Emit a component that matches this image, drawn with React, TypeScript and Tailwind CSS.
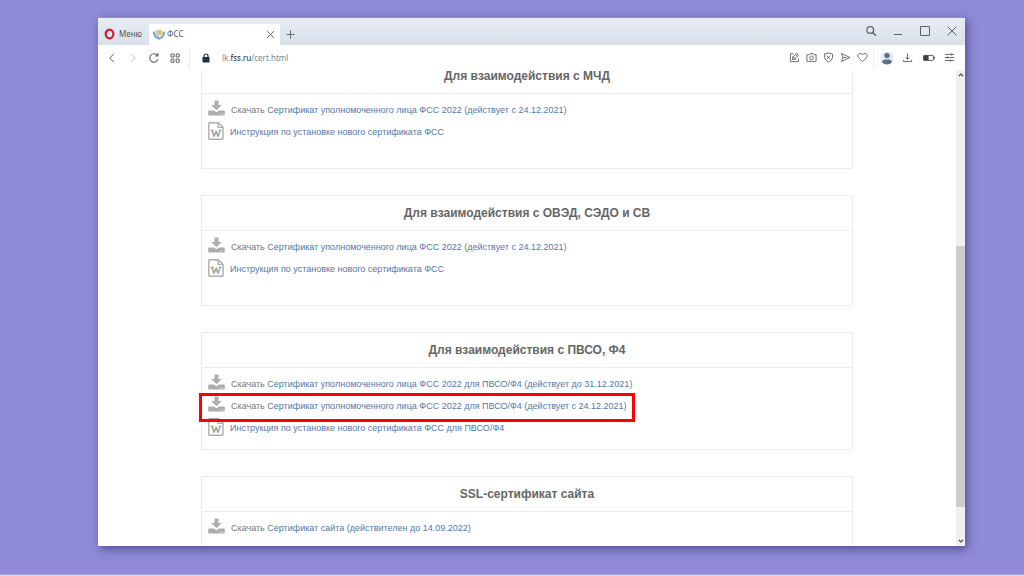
import { useState, type ReactNode } from 'react';
import clsx from 'clsx';

type Item = {
  kind: 'cert' | 'doc';
  text: string;
  marked?: boolean;
};

type Section = {
  title: string;
  items: Item[];
  tall?: boolean;
};

const sections: Section[] = [
  {
    title: 'Для взаимодействия с МЧД',
    tall: true,
    items: [
      { kind: 'cert', text: 'Сертификат уполномоченного лица ФСС 2022 (действует с 24.12.2021)' },
      { kind: 'doc', text: 'Инструкция по установке нового сертификата ФСС' },
    ],
  },
  {
    title: 'Для взаимодействия с ОВЭД, СЭДО и СВ',
    tall: true,
    items: [
      { kind: 'cert', text: 'Сертификат уполномоченного лица ФСС 2022 (действует с 24.12.2021)' },
      { kind: 'doc', text: 'Инструкция по установке нового сертификата ФСС' },
    ],
  },
  {
    title: 'Для взаимодействия с ПВСО, Ф4',
    items: [
      { kind: 'cert', text: 'Сертификат уполномоченного лица ФСС 2022 для ПВСО/Ф4 (действует до 31.12.2021)' },
      { kind: 'cert', text: 'Сертификат уполномоченного лица ФСС 2022 для ПВСО/Ф4 (действует с 24.12.2021)', marked: true },
      { kind: 'doc', text: 'Инструкция по установке нового сертификата ФСС для ПВСО/Ф4' },
    ],
  },
  {
    title: 'SSL-сертификат сайта',
    items: [{ kind: 'cert', text: 'Сертификат сайта (действителен до 14.09.2022)' }],
  },
];

function DownloadIcon() {
  return (
    <svg viewBox="0 0 17 16" className="w-[17px] h-4 shrink-0" fill="#adadad" aria-hidden="true">
      <path d="M6.5 0.5h4v4.5h3.3L8.5 10.3 3.2 5h3.3z" />
      <path d="M1 10.5h5.2l1.4 1.3q0.9 0.7 1.8 0l1.4-1.3H16q0.8 0 0.8 0.8v3.4q0 0.8-0.8 0.8H1q-0.8 0-0.8-0.8v-3.4q0-0.8 0.8-0.8z" />
      <path d="M12 13.5h1v1h-1zM14.2 13.5h1v1h-1z" fill="#e6e6e6" />
    </svg>
  );
}

function WordIcon() {
  return (
    <svg viewBox="0 0 16 18" className="w-4 h-[18px] shrink-0" aria-hidden="true">
      <path d="M1.5 0.8h8.8l4.7 4.4v11.3q0 0.7-0.7 0.7H1.5q-0.7 0-0.7-0.7V1.5q0-0.7 0.7-0.7z" fill="#fff" stroke="#adadad" strokeWidth="1.4" />
      <path d="M10 0.8v4.6h5" fill="none" stroke="#adadad" strokeWidth="1.3" />
      <text
        x="8"
        y="14.8"
        textAnchor="middle"
        fontSize="11"
        fontFamily="Liberation Serif, serif"
        fill="#9e9e9e"
        stroke="#9e9e9e"
        strokeWidth="0.5"
      >
        W
      </text>
    </svg>
  );
}

function Line({ children, size = 12, className }: { children: ReactNode; size?: number; className?: string }) {
  return (
    <svg
      viewBox="0 0 12 12"
      width={size}
      height={size}
      fill="none"
      stroke="#5c6268"
      strokeWidth="1"
      className={className}
      aria-hidden="true"
    >
      {children}
    </svg>
  );
}

function Tool({ label, wide, children }: { label: string; wide?: boolean; children: ReactNode }) {
  return (
    <button aria-label={label} className={clsx('h-full shrink-0 flex items-center justify-center', wide ? 'w-[21px]' : 'w-[17px]')}>
      {children}
    </button>
  );
}

function WindowButton({ label, children }: { label: string; children: ReactNode }) {
  return (
    <button aria-label={label} className="w-[27px] h-full flex items-center justify-center">
      {children}
    </button>
  );
}

function TitleBar({ onClose }: { onClose: () => void }) {
  return (
    <div className="h-7 flex items-end border-t border-[#6d9fe0] bg-linear-to-b from-[#e5edf5] to-[#d9e0e9] font-['Noto_Sans'] text-[8px] text-[#555]">
      <button className="w-[51px] h-[21px] pl-1.5 flex items-center gap-1">
        <svg viewBox="0 0 12 12" width="11" height="12" aria-hidden="true">
          <ellipse cx="6" cy="6" rx="4.2" ry="4.7" fill="none" stroke="#e3142b" strokeWidth="2.4" />
        </svg>
        Меню
      </button>
      <div className="w-[131px] h-[21px] px-1 flex items-center gap-0.5 bg-white">
        <svg viewBox="0 0 12 12" width="12" height="12" aria-hidden="true">
          <path d="M1 3.5Q0.5 9 6 10.8 11.5 9 11 3.5" fill="none" stroke="#7ba3d0" strokeWidth="2" />
          <path d="M3 2.5Q2.5 7 6 9" fill="none" stroke="#a9c4e2" strokeWidth="1.5" />
          <circle cx="6.6" cy="4.4" r="3" fill="#e4c877" />
          <path d="M5.5 3.5l2 2" stroke="#8b9fb0" strokeWidth="0.7" />
        </svg>
        <span className="grow">ФСС</span>
        <button aria-label="Закрыть вкладку" onClick={onClose}>
          <Line size={11}>
            <path d="M2.3 2.3l7.4 7.4M9.7 2.3L2.3 9.7" />
          </Line>
        </button>
      </div>
      <button aria-label="Новая вкладка" className="w-[21px] h-[21px] flex items-center justify-center">
        <Line size={11}>
          <path d="M6 1.5v9M1.5 6h9" />
        </Line>
      </button>
      <div className="grow" />
      <div className="h-full flex">
        <WindowButton label="Поиск">
          <Line>
            <circle cx="5.2" cy="5" r="3.4" strokeWidth="1.2" />
            <path d="M7.7 7.5l3.3 3.3" strokeWidth="1.4" />
          </Line>
        </WindowButton>
        <WindowButton label="Свернуть">
          <Line>
            <path d="M2 9.5h8" />
          </Line>
        </WindowButton>
        <WindowButton label="Развернуть">
          <Line>
            <path d="M1.5 1.5h9v9h-9z" />
          </Line>
        </WindowButton>
        <WindowButton label="Закрыть">
          <Line>
            <path d="M1.7 1.7l8.6 8.6M10.3 1.7l-8.6 8.6" />
          </Line>
        </WindowButton>
      </div>
    </div>
  );
}

function AddressBar() {
  return (
    <div className="h-[25px] pt-px pl-[3px] pr-[5px] flex items-center bg-white">
      <Tool wide label="Назад">
        <Line>
          <path d="M7.8 1.8L3.8 6l4 4.2" />
        </Line>
      </Tool>
      <Tool wide label="Вперёд">
        <Line className="opacity-40">
          <path d="M4.2 1.8l4 4.2-4 4.2" />
        </Line>
      </Tool>
      <Tool wide label="Обновить">
        <Line>
          <path d="M10 7.2A4.2 4.2 0 1 1 9.3 3.4M9.9 1v3H7" strokeWidth="1.1" />
        </Line>
      </Tool>
      <Tool wide label="Экспресс-панель">
        <Line>
          <path d="M2 2h3v3H2zM7.2 2h3v3h-3zM2 7.2h3v3H2zM7.2 7.2h3v3h-3z" />
        </Line>
      </Tool>
      <div className="w-px h-5 ml-1 mr-3 bg-[#eeeff1]" />
      <svg viewBox="0 0 8 10" width="8" height="10" aria-hidden="true">
        <path d="M2 5V3a2 2 0 0 1 4 0v2" fill="none" stroke="#26303a" strokeWidth="1.2" />
        <rect x="0.5" y="4" width="7" height="5.4" rx="0.6" fill="#26303a" />
      </svg>
      <button aria-label="Адрес страницы" className="ml-3 grow text-left font-['Noto_Sans'] text-[8px] text-[#7d8792]">
        lk.<span className="text-[#20262c]">fss.ru</span>/cert.html
      </button>
      <Tool label="Поделиться">
        <Line size={11}>
          <path d="M5 2H1.5v8.5h8.8V7" />
          <path d="M3.6 8.3l0.5-2.4L8.5 1.4l2 2L6 7.8zM7.2 2.7l2 2M3.8 5l4 3.6" />
        </Line>
      </Tool>
      <Tool label="Снимок экрана">
        <Line size={11}>
          <path d="M1 3h2.4l1-1.3h3.2l1 1.3H11v7.2H1z" />
          <circle cx="6" cy="6.4" r="2" />
        </Line>
      </Tool>
      <Tool label="Блокировка рекламы">
        <Line size={11}>
          <path d="M6 1l4.4 1.2v3.6Q10.2 9 6 11 1.8 9 1.6 5.8V2.2z" />
          <path d="M4.3 4l3.4 3.6M7.7 4L4.3 7.6" />
        </Line>
      </Tool>
      <Tool label="Отправить">
        <Line size={11}>
          <path d="M1.5 1.7L11 6l-9.5 4.3L3.2 6zM3.2 6h4" />
        </Line>
      </Tool>
      <Tool label="В закладки">
        <Line size={11}>
          <path d="M6 10.6L2 6.6C-0.2 4 1.2 1.5 3.3 1.5 4.8 1.5 5.6 2.4 6 3.2 6.4 2.4 7.2 1.5 8.7 1.5c2.1 0 3.5 2.5 1.3 5.1z" />
        </Line>
      </Tool>
      <div className="w-px h-5 mx-0.5 bg-[#eeeff1]" />
      <Tool wide label="Профиль">
        <svg viewBox="0 0 14 14" width="14" height="14" aria-hidden="true">
          <circle cx="7" cy="7" r="6.6" fill="#e4ebf3" />
          <circle cx="7" cy="4.6" r="2.7" fill="#5f6f86" />
          <path d="M2 11.3q0.5-2.8 3.5-2.8h3q3 0 3.5 2.8Q9.8 13.5 7 13.5t-5-2.2z" fill="#5f6f86" />
        </svg>
      </Tool>
      <Tool wide label="Загрузки">
        <Line size={11}>
          <path d="M6 1.5v6.3M3.8 5.8L6 8l2.2-2.2M1.5 8.5v1.8h9V8.5" />
        </Line>
      </Tool>
      <Tool wide label="Экономия заряда">
        <Line size={12}>
          <rect x="0.6" y="3.4" width="9.8" height="5" rx="0.6" />
          <rect x="0.6" y="3.4" width="5" height="5" fill="#3b4148" stroke="none" />
          <path d="M11.5 4.8v2.4" />
        </Line>
      </Tool>
      <Tool wide label="Простая настройка">
        <Line size={11}>
          <path d="M1 2.7h10M1 6h10M1 9.3h10M8 1.5v2.4M4 4.8v2.4M7 8.1v2.4" />
        </Line>
      </Tool>
    </div>
  );
}

function Row({ item }: { item: Item }) {
  return (
    <li className="relative w-fit h-[22px] flex items-start whitespace-nowrap">
      {item.kind === 'cert' ? <DownloadIcon /> : <WordIcon />}
      <p className="ml-1.5 self-center">
        {item.kind === 'cert' && 'Скачать '}
        <a href="#cert" className="text-[#5578a8]">
          {item.text}
        </a>
      </p>
      {item.marked && (
        <span className="absolute -top-[3px] -bottom-1 -left-[9px] -right-2 z-10 border-3 border-[#fe0000] pointer-events-none" />
      )}
    </li>
  );
}

function Card({ section }: { section: Section }) {
  return (
    <section className="border border-[#ececec]">
      <h2 className="h-[35px] flex items-center justify-center border-b border-[#ececec] text-[12px] font-bold text-[#666]">
        {section.title}
      </h2>
      <ul className={clsx('pt-1.5 pl-1.5 text-[9px] text-[#777]', section.tall ? 'pb-6' : 'pb-[9px]')}>
        {section.items.map((item) => (
          <Row key={item.text} item={item} />
        ))}
      </ul>
    </section>
  );
}

function ScrollBar() {
  return (
    <div className="w-[9px] shrink-0 flex flex-col bg-[#f0f0f0]">
      <button aria-label="Вверх" className="h-[10px] flex items-center justify-center">
        <Line size={6}>
          <path d="M1.5 8.5L6 4l4.5 4.5" strokeWidth="2.5" />
        </Line>
      </button>
      <div className="grow-[166]" />
      <div className="grow-[260] bg-[#cdcdcd]" />
      <div className="grow-[29]" />
      <button aria-label="Вниз" className="h-[10px] flex items-center justify-center">
        <Line size={6}>
          <path d="M1.5 3.5L6 8l4.5-4.5" strokeWidth="2.5" />
        </Line>
      </button>
    </div>
  );
}

export default function App() {
  const [open, setOpen] = useState(true);

  return (
    <div className="h-screen flex flex-col bg-[#8f8bd8] font-['Liberation_Sans',sans-serif]">
      <div className="grow min-h-0 flex flex-col pt-[17px] pr-[59px] pb-7 pl-[98px]">
        <div className="grow min-h-0 flex flex-col bg-white shadow-[2px_3px_9px_rgba(40,35,90,0.6)]">
          <TitleBar onClose={() => setOpen(false)} />
          <AddressBar />
          <div className="grow min-h-0 flex">
            <main className="grow overflow-hidden px-[103px]">
              {open && (
                <div className="-mt-3 flex flex-col gap-[26px]">
                  {sections.map((section) => (
                    <Card key={section.title} section={section} />
                  ))}
                </div>
              )}
            </main>
            <ScrollBar />
          </div>
        </div>
      </div>
      {/* upper edge of the taskbar */}
      <div className="h-0.5 shrink-0 border-t border-[#a9a6e2] bg-[#d9d8f3]" />
    </div>
  );
}
